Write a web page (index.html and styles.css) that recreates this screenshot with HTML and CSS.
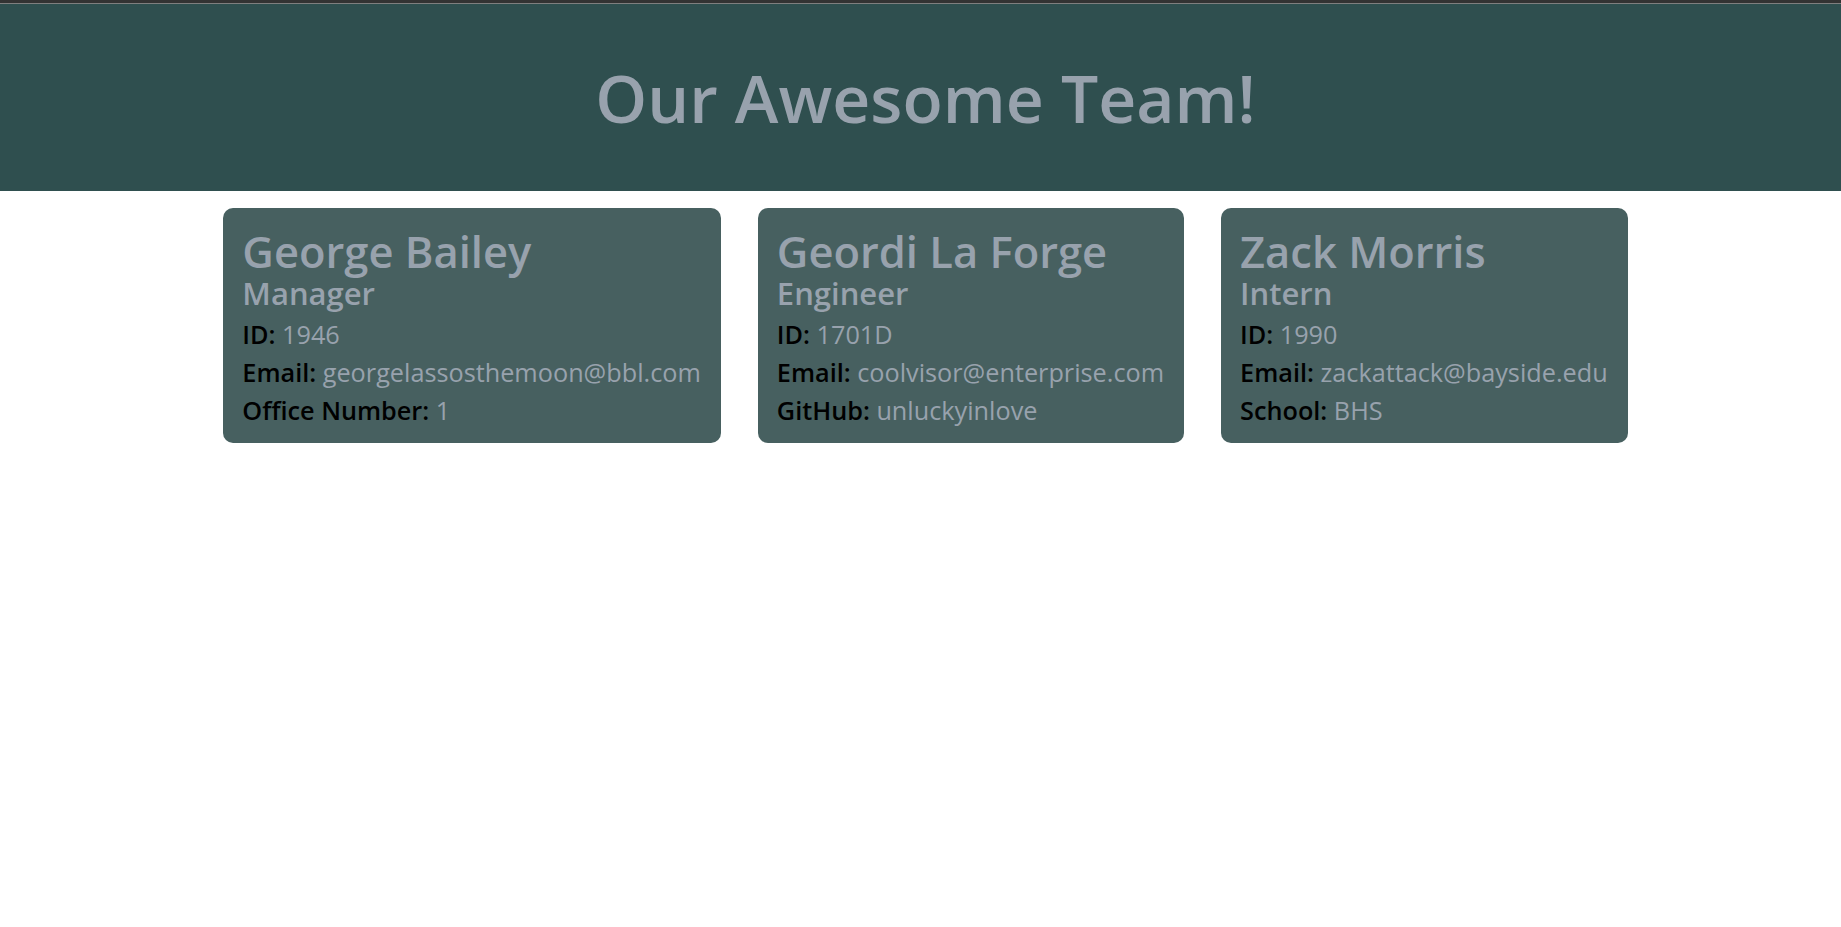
FILE: index.html
```html
<!DOCTYPE html>
<html lang="en">
<head>
<meta charset="utf-8">
<title>Our Awesome Team!</title>
<link rel="stylesheet" href="styles.css">
</head>
<body>
<header class="hero">
  <h1 class="hero-title">Our Awesome Team!</h1>
</header>
<main class="team">
  <section class="card">
    <h2 class="card-name">George Bailey</h2>
    <h3 class="card-role">Manager</h3>
    <p class="card-row"><strong class="label">ID:</strong> 1946</p>
    <p class="card-row"><strong class="label">Email:</strong> georgelassosthemoon@bbl.com</p>
    <p class="card-row"><strong class="label">Office Number:</strong> 1</p>
  </section>
  <section class="card">
    <h2 class="card-name">Geordi La Forge</h2>
    <h3 class="card-role">Engineer</h3>
    <p class="card-row"><strong class="label">ID:</strong> 1701D</p>
    <p class="card-row"><strong class="label">Email:</strong> coolvisor@enterprise.com</p>
    <p class="card-row"><strong class="label">GitHub:</strong> unluckyinlove</p>
  </section>
  <section class="card">
    <h2 class="card-name">Zack Morris</h2>
    <h3 class="card-role">Intern</h3>
    <p class="card-row"><strong class="label">ID:</strong> 1990</p>
    <p class="card-row"><strong class="label">Email:</strong> zackattack@bayside.edu</p>
    <p class="card-row"><strong class="label">School:</strong> BHS</p>
  </section>
</main>
</body>
</html>
```
FILE: styles.css
```css
* { box-sizing: border-box; }

body {
  margin: 0;
  background: #ffffff;
  font-family: "Open Sans", "Noto Sans", sans-serif;
  color: #98a2ad;
}

.hero {
  background: #2f4f4f;
  border-top: 3px solid #333333;
  box-shadow: inset 0 1px 0 #7f7f7f;
  padding: 49px 0 49px 10px;
  text-align: center;
}

.hero-title {
  margin: 0;
  font-size: 66px;
  line-height: 90px;
  font-weight: 600;
  color: #98a2ad;
}

.team {
  display: flex;
  justify-content: center;
  align-items: flex-start;
  gap: 37px;
  margin-top: 17px;
  padding-left: 10px;
}

.card {
  background: #476060;
  border-radius: 10px;
  padding: 22px 20px 14px 19px;
  white-space: nowrap;
}

.card-name {
  margin: 0;
  font-size: 43.5px;
  line-height: 44px;
  font-weight: 600;
  color: #98a2ad;
}

.card-role {
  margin: 0 0 3px;
  font-size: 31px;
  line-height: 38px;
  font-weight: 600;
  color: #98a2ad;
}

.card-row {
  margin: 0;
  font-size: 25.25px;
  line-height: 38px;
  font-weight: 500;
  color: #98a2ad;
}

.label {
  font-weight: 600;
  color: #000000;
}
```
